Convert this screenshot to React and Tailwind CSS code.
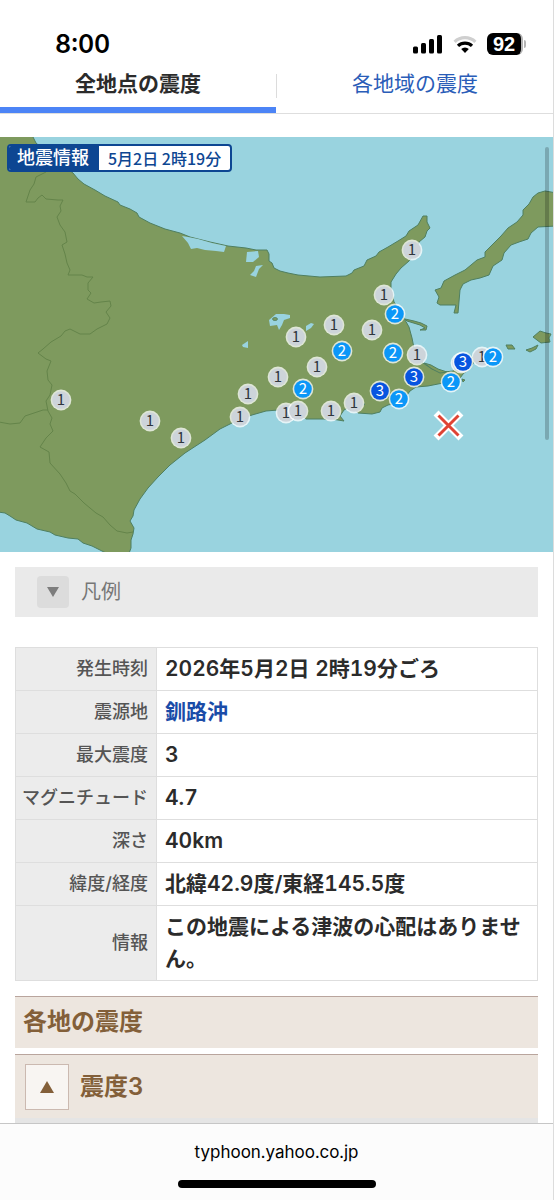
import { useState } from 'react';

const LAND = '#7e9a5e';
const COAST = '#4f7f60';
const BORDER = '#64844a';
const SEA = '#99d3df';

const stations = [
  { x: 412, y: 250, level: 1 },
  { x: 384, y: 295, level: 1 },
  { x: 395, y: 314, level: 2 },
  { x: 334, y: 325, level: 1 },
  { x: 372, y: 330, level: 1 },
  { x: 296, y: 337, level: 1 },
  { x: 342, y: 351, level: 2 },
  { x: 393, y: 353, level: 2 },
  { x: 417, y: 355, level: 1 },
  { x: 317, y: 367, level: 1 },
  { x: 278, y: 377, level: 1 },
  { x: 303, y: 389, level: 2 },
  { x: 248, y: 394, level: 1 },
  { x: 61, y: 400, level: 1 },
  { x: 240, y: 417, level: 1 },
  { x: 150, y: 421, level: 1 },
  { x: 181, y: 438, level: 1 },
  { x: 286, y: 413, level: 1 },
  { x: 298, y: 411, level: 1 },
  { x: 331, y: 411, level: 1 },
  { x: 354, y: 403, level: 1 },
  { x: 380, y: 391, level: 3 },
  { x: 399, y: 399, level: 2 },
  { x: 414, y: 377, level: 3 },
  { x: 451, y: 382, level: 2 },
  { x: 461, y: 363, level: 1 },
  { x: 463, y: 362, level: 3 },
  { x: 482, y: 357, level: 1 },
  { x: 493, y: 357, level: 2 },
];

const levelColors = {
  1: { fill: '#cdd4da', text: '#30363d' },
  2: { fill: '#0b97f8', text: '#ffffff' },
  3: { fill: '#0755e0', text: '#ffffff' },
};

const details = [
  { label: '発生時刻', value: '2026年5月2日 2時19分ごろ' },
  { label: '震源地', value: '釧路沖', link: true },
  { label: '最大震度', value: '3' },
  { label: 'マグニチュード', value: '4.7' },
  { label: '深さ', value: '40km' },
  { label: '緯度/経度', value: '北緯42.9度/東経145.5度' },
  { label: '情報', value: 'この地震による津波の心配はありません。' },
];

function StatusBar() {
  return (
    <div className="flex h-16 items-end justify-between pr-[27px] pb-1 pl-[55px] text-black">
      <span className="text-[25px] leading-8 font-semibold">8:00</span>
      <div className="flex h-8 items-center gap-[10px]">
        <svg width="30" height="20" viewBox="0 0 30 20" fill="currentColor">
          <rect x="0" y="12.5" width="5" height="7" rx="1.5" />
          <rect x="8" y="9" width="5" height="10.5" rx="1.5" />
          <rect x="16" y="5" width="5" height="14.5" rx="1.5" />
          <rect x="24" y="1" width="5" height="18.5" rx="1.5" />
        </svg>
        <svg width="24" height="20" viewBox="0 0 24 20" fill="none" strokeWidth="3.2">
          <path d="M1.6 7.8a15 15 0 0 1 20.8 0" stroke="#cfcfcf" />
          <path d="M5 11.9a10 10 0 0 1 14 0" stroke="#000" />
          <path d="M12 19l-3.8-3.9a5.4 5.4 0 0 1 7.6 0z" fill="#000" />
        </svg>
        <div className="flex items-center gap-px">
          <span className="flex h-[22px] w-9 items-center justify-center rounded-md border-r-2 border-[#b5b5b5] bg-black font-['Liberation_Sans',sans-serif] text-xl leading-5 font-bold text-white">
            92
          </span>
          <span className="h-2 w-0.5 rounded-r bg-[#b5b5b5]" />
        </div>
      </div>
    </div>
  );
}

function Tabs({ active, onChange }) {
  const base = 'h-full flex-1 pb-[10px] text-[21px] leading-8';
  return (
    <nav className="relative flex h-[50px] border-b border-[#dedede]">
      <button
        onClick={() => onChange('points')}
        className={`${base} ${active === 'points' ? 'font-semibold text-[#2b2b2b] shadow-[inset_0_-6px_0_#4c84f6]' : 'text-[#2a5db8]'}`}
      >
        全地点の震度
      </button>
      <span className="mt-[10px] h-6 w-px bg-[#dcdcdc]" />
      <button
        onClick={() => onChange('areas')}
        className={`${base} ${active === 'areas' ? 'font-semibold text-[#2b2b2b] shadow-[inset_0_-6px_0_#4c84f6]' : 'text-[#2a5db8]'}`}
      >
        各地域の震度
      </button>
    </nav>
  );
}

function Station({ x, y, level }) {
  const { fill, text } = levelColors[level];
  return (
    <g>
      <circle cx={x} cy={y} r="10.4" fill="#fff" fillOpacity="0.75" />
      <circle cx={x} cy={y} r="8.8" fill={fill} />
      <text x={x} y={y + 5} textAnchor="middle" fontSize="15" fill={text}>
        {level}
      </text>
    </g>
  );
}

function QuakeMap() {
  return (
    <div className="relative">
      <svg
        viewBox="0 137 553 415"
        className="block h-auto w-full bg-[#99d3df] font-['Noto_Sans_CJK_JP',sans-serif]"
        role="img"
        aria-label="震度分布"
      >
        <g fill={LAND} stroke={COAST} strokeWidth="1" strokeLinejoin="round">
          {/* Hokkaido */}
          <path d="M-2 130 L31 133 L36 143 L50 155 L62 165 L73 173 L78 179 L84 184 L95 190 L105 196 L118 202 L120 205 L130 209 L137 213 L139 217 L150 223 L165 229 L180 233 L190 237 L210 242 L228 246 L246 248 L256 250 L267 250 L269 254 L269 261 L272 263 L274 268 L280 271 L288 273 L298 275 L320 277 L346 276 L352 273 L354 270 L364 266 L367 260 L376 256 L379 252 L388 247 L398 241 L406 236 L409 231 L418 225 L423 216 L427 216 L427 222 L430 228 L427 231 L425 237 L419 242 L414 254 L409 261 L401 268 L396 274 L391 282 L391 289 L394 302 L402 314 L405 320 L409 327 L412 338 L414 348 L416 358 L423 363 L432 369 L444 372 L453 371 L460 367 L468 362 L473 357 L475 353 L476 359 L470 368 L463 374 L458 381 L448 382 L438 384 L428 386 L416 387 L410 391 L404 399 L397 403 L388 405 L382 408 L380 412 L372 414 L358 413 L355 409 L365 404 L351 406 L344 410 L340 416 L344 421 L332 419 L306 419 L298 413 L288 411 L278 410 L266 411 L252 415 L236 421 L220 429 L205 440 L185 453 L170 465 L158 477 L148 488 L140 499 L134 510 L133 516 L130 521 L134 528 L133 534 L131 540 L131 548 L128 556 L106 553 L92 546 L83 543 L78 539 L68 538 L55 535 L50 532 L37 529 L27 523 L16 520 L10 516 L5 513 L-2 512 Z" />
          <path d="M405 319 L414 321 L421 323 L427 326 L426 330 L420 330 L425 328 L420 325 L407 321 Z" />
          <path d="M424 363 L431 365 L438 369 L447 372 L440 373 L432 369 Z" />
          <path d="M462 379 l3 1 l-2 2 z" />
          {/* Kunashiri */}
          <path d="M556 193 L551 192 L545 191 L538 193 L533 197 L529 204 L523 210 L523 215 L517 222 L508 228 L501 236 L494 243 L485 252 L485 257 L477 260 L465 270 L455 275 L444 281 L441 288 L435 290 L439 297 L437 303 L440 305 L456 305 L454 313 L458 313 L460 290 L463 284 L471 280 L480 278 L489 275 L493 266 L502 260 L504 253 L511 245 L519 242 L528 239 L531 233 L538 227 L556 226 Z" />
          {/* Habomai, Shikotan */}
          <path d="M506 345 L512 345 L515 349 L508 349 Z" />
          <path d="M526 350 L532 348 L534 347 L538 345 L536 349 L530 352 Z" />
          <path d="M533 337 L540 331 L546 333 L551 334 L549 338 L550 342 L541 343 Z" />
        </g>

        <g fill="none" stroke={BORDER} strokeWidth="1" strokeLinejoin="round">
          <path d="M46 172 L36 177 L34 184 L30 190 L26 202 L35 202 L38 198 L42 195 L46 199 L58 200 L63 200 L60 206 L61 211 L57 217 L60 225 L65 232 L67 242 L62 245 L65 254 L67 263 L70 270 L68 275 L82 275 L87 277 L93 277 L88 283 L88 290 L91 293 L87 299 L94 303 L101 302 L110 301 L111 306 L106 312 L110 318 L107 324 L97 329 L90 334 L80 334 L70 329 L65 331 L61 336 L51 342 L43 349 L38 353 L46 359 L51 361 L47 371 L48 380 L52 385 L50 395 L46 401 L48 411 L52 418 L50 424 L53 431 L46 438 L40 447 L49 452 L50 463 L60 474 L66 483 L70 491 L75 494 L84 503 L96 513 L103 517 L110 525 L117 531 L127 533 L133 532" />
          <path d="M-1 422 L10 424 L20 423 L25 416 L34 413 L43 410 L48 410" />
        </g>

        {/* Lakes */}
        <g fill={SEA}>
          <path d="M182 236 L188 237 L198 239 L212 243 L226 246 L224 252 L216 251 L205 250 L197 248 L191 249 L188 243 Z" />
          <path d="M247 252 L258 251 L259 257 L253 262 L246 262 Z" />
          <path d="M256 266 L263 265 L259 269 L256 277 L250 275 L254 271 Z" />
          <path d="M276 314 L284 314 L290 315 L290 318 L284 320 L282 325 L279 330 L277 325 L270 326 L269 320 Z" />
          <path d="M306 326 L311 323 L314 324 L311 328 L306 331 Z" />
          <path d="M242 345 L248 341 L248 348 L243 347 Z" />
        </g>
        <ellipse cx="275" cy="319" rx="2.5" ry="1.5" fill={LAND} stroke={COAST} strokeWidth="0.8" />

        {stations.map((s, i) => (
          <Station key={i} {...s} />
        ))}

        {/* Epicenter */}
        <path d="M438.500 415.500l20 20M458.500 415.500l-20 20" stroke="#fff" strokeWidth="7" strokeLinecap="square" strokeLinejoin="round" />
        <path d="M438.500 415.500l20 20M458.500 415.500l-20 20" stroke="#df4334" strokeWidth="3" />
      </svg>

      <div className="absolute top-[7px] left-[7px] flex h-7 items-stretch overflow-hidden rounded border-2 border-[#0d4692] bg-white font-medium">
        <span className="flex items-center bg-[#0d4692] pr-[10px] pl-2 text-lg leading-6 text-white">地震情報</span>
        <span className="flex items-center px-[9px] font-['Noto_Sans_CJK_JP',sans-serif] text-base leading-6 text-[#0d4692]">5月2日 2時19分</span>
      </div>
      <div className="absolute top-[10px] right-1 h-[293px] w-1 rounded-full bg-black/20" />
    </div>
  );
}

function DetailTable() {
  return (
    <table className="w-full border-collapse border border-[#dedede]">
      <tbody>
        {details.map((row) => (
          <tr key={row.label} className="border-b border-[#dedede]">
            <th className="w-[141px] border-r border-[#dedede] bg-[#ececec] pr-2 text-right text-lg leading-8 font-medium whitespace-nowrap text-[#555]">
              {row.label}
            </th>
            <td className="px-2 py-[5px] text-[21px] leading-8 font-semibold text-[#2b2b2b]">
              {row.link ? (
                <a href="#" className="text-[#1a4ca8]">{row.value}</a>
              ) : (
                row.value
              )}
            </td>
          </tr>
        ))}
      </tbody>
    </table>
  );
}

export default function App() {
  const [tab, setTab] = useState('points');

  return (
    <div className="flex min-h-screen flex-col border-r border-[#dcdcdc] bg-white font-['Inter','Noto_Sans_CJK_JP',sans-serif] tabular-nums">
      <StatusBar />
      <Tabs active={tab} onChange={setTab} />

      <main className="flex-1 pt-[23px]">
        <QuakeMap />

        <div className="px-[15px] pt-[15px]">
          <button className="flex h-[50px] w-full items-center gap-3 bg-[#eaeaea] pl-[22px] text-xl text-[#777]">
            <span className="flex size-8 items-center justify-center rounded bg-[#dcdcdc]">
              <svg width="12" height="10" viewBox="0 0 12 10" fill="#7d7d7d">
                <path d="M0 0h12L6 10z" />
              </svg>
            </span>
            凡例
          </button>

          <div className="mt-[30px]">
            <DetailTable />
          </div>

          <h2 className="mt-[15px] border-t border-[#b9a59d] bg-[#ede6df] px-2 pt-[9px] pb-[10px] text-2xl leading-8 font-semibold text-[#835f39]">
            各地の震度
          </h2>

          <h3 className="mt-[6px] border-t border-[#b9a59d] bg-[#ede6df] text-2xl leading-8 font-semibold text-[#835f39]">
            <button className="flex h-[63px] w-full items-center gap-[11px] px-[10px]">
              <span className="flex h-[46px] w-11 items-center justify-center border border-[#cbb9b0] bg-[#f8f5f2]">
                <svg width="14" height="12" viewBox="0 0 14 12" fill="#835f39">
                  <path d="M7 0l7 12H0z" />
                </svg>
              </span>
              震度3
            </button>
          </h3>
          <div className="h-[5px] bg-[#e5e5e5]" />
        </div>
      </main>

      <footer className="flex flex-col items-center border-t border-[#c6c6c6] bg-[#fcfcfc] pt-4 pb-3 text-black">
        <button className="text-[17px] leading-6">typhoon.yahoo.co.jp</button>
        <span className="mt-4 h-2 w-[198px] rounded-full bg-black" />
      </footer>
    </div>
  );
}
